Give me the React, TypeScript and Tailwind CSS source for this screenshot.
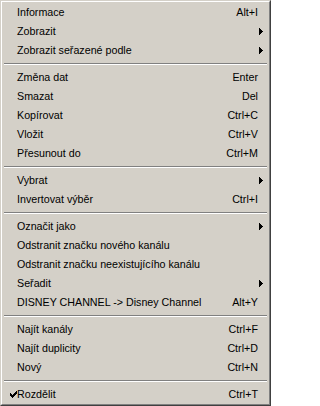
import React from 'react';

type Entry =
  | { kind: 'sep' }
  | { kind: 'item'; label: string; shortcut?: string; sub?: boolean; checked?: boolean };

const entries: Entry[] = [
  { kind: 'item', label: 'Informace', shortcut: 'Alt+I' },
  { kind: 'item', label: 'Zobrazit', sub: true },
  { kind: 'item', label: 'Zobrazit seřazené podle', sub: true },
  { kind: 'sep' },
  { kind: 'item', label: 'Změna dat', shortcut: 'Enter' },
  { kind: 'item', label: 'Smazat', shortcut: 'Del' },
  { kind: 'item', label: 'Kopírovat', shortcut: 'Ctrl+C' },
  { kind: 'item', label: 'Vložit', shortcut: 'Ctrl+V' },
  { kind: 'item', label: 'Přesunout do', shortcut: 'Ctrl+M' },
  { kind: 'sep' },
  { kind: 'item', label: 'Vybrat', sub: true },
  { kind: 'item', label: 'Invertovat výběr', shortcut: 'Ctrl+I' },
  { kind: 'sep' },
  { kind: 'item', label: 'Označit jako', sub: true },
  { kind: 'item', label: 'Odstranit značku nového kanálu' },
  { kind: 'item', label: 'Odstranit značku neexistujícího kanálu' },
  { kind: 'item', label: 'Seřadit', sub: true },
  { kind: 'item', label: 'DISNEY CHANNEL -> Disney Channel', shortcut: 'Alt+Y' },
  { kind: 'sep' },
  { kind: 'item', label: 'Najít kanály', shortcut: 'Ctrl+F' },
  { kind: 'item', label: 'Najít duplicity', shortcut: 'Ctrl+D' },
  { kind: 'item', label: 'Nový', shortcut: 'Ctrl+N' },
  { kind: 'sep' },
  { kind: 'item', label: 'Rozdělit', shortcut: 'Ctrl+T', checked: true },
];

// pixel check mark, like the classic Marlett glyph
const checkPixels = [
  '......X',
  '.....XX',
  'X...XXX',
  'XX.XXX.',
  'XXXXX..',
  '.XXX...',
  '..X....',
];

const Check = () => (
  <svg width="7" height="7" viewBox="0 0 7 7" shapeRendering="crispEdges" className="shrink-0">
    {checkPixels.map((row, y) =>
      row.split('').map((c, x) =>
        c === 'X' ? <rect key={`${x}-${y}`} x={x} y={y} width="1" height="1" fill="#000" /> : null
      )
    )}
  </svg>
);

const Arrow = () => (
  <svg width="4" height="7" viewBox="0 0 4 7" shapeRendering="crispEdges" className="shrink-0">
    <path d="M0 0 L4 3.5 L0 7 Z" fill="#000" />
  </svg>
);

const App: React.FC = () => {
  return (
    <div
      className="w-[271px] h-[406px] bg-[#d4d0c8] border border-t-[#d4d0c8] border-l-[#d4d0c8] border-r-[#404040] border-b-[#404040] overflow-hidden"
      style={{ fontFamily: '"Liberation Sans", Arial, sans-serif' }}
    >
      <div className="h-full border border-t-white border-l-white border-r-[#808080] border-b-[#808080] pt-px px-px">
        {entries.map((e, i) =>
          e.kind === 'sep' ? (
            <div key={i} className="h-[8px] flex flex-col justify-center px-px">
              <div className="h-px bg-[#808080]" />
              <div className="h-px bg-white" />
            </div>
          ) : (
            <div key={i} className="h-[19px] flex items-center pl-[7px] pr-[5px] text-[10.7px] text-black leading-none">
              <div className="w-[7px] shrink-0 flex items-center">{e.checked && <Check />}</div>
              <span className="flex-1 whitespace-nowrap">{e.label}</span>
              {e.shortcut && <span className="whitespace-nowrap">{e.shortcut}</span>}
              <div className="w-[5px] shrink-0 flex justify-end items-center">{e.sub && <Arrow />}</div>
            </div>
          )
        )}
      </div>
    </div>
  );
};

export default App;
